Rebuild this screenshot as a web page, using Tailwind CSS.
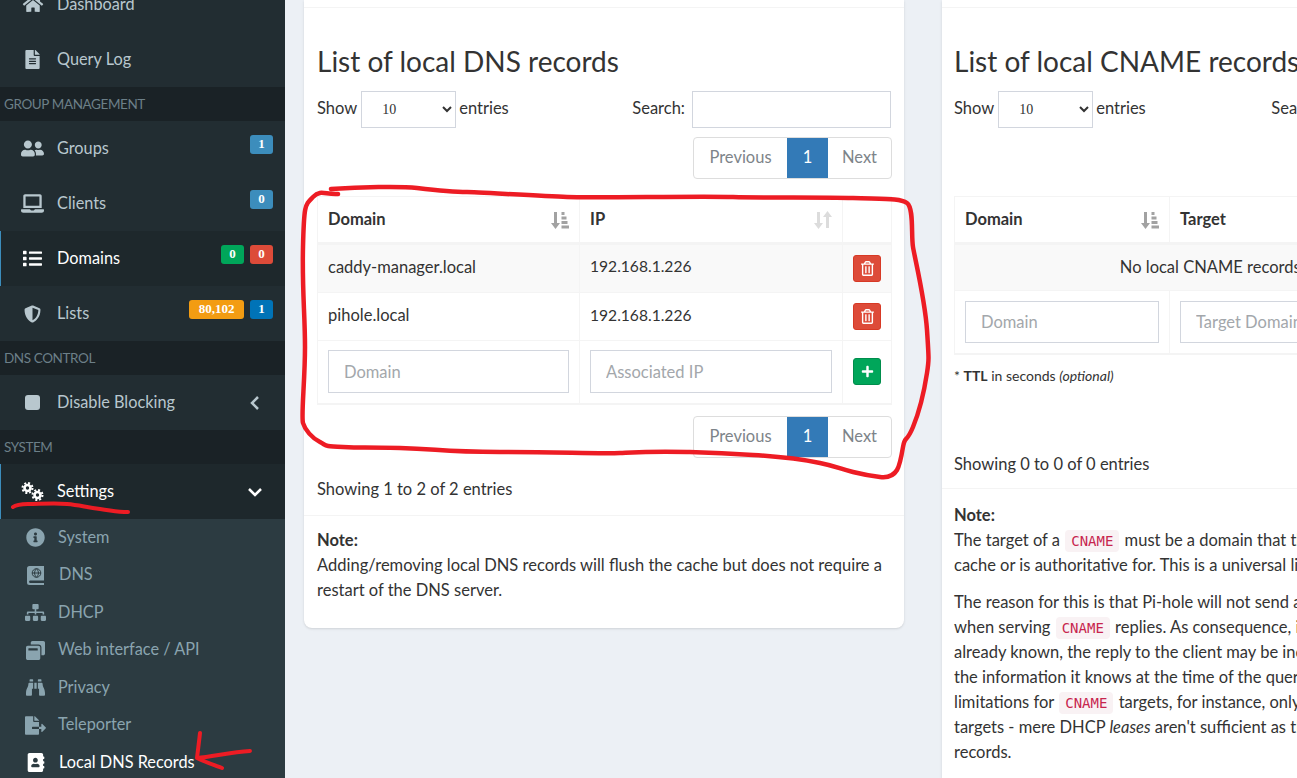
<!doctype html>
<html>

<head>
    <meta charset="UTF-8" />
    <title>Local DNS Records</title>
    <script src="https://cdn.jsdelivr.net/npm/@tailwindcss/browser@4"></script>
</head>

<body class="bg-[#ecf0f5] font-['Lato',sans-serif] text-[16.5px] text-[#333]">
    <div class="relative flex h-[778px] w-[1297px] overflow-hidden">

        <!-- sidebar -->
        <aside class="w-[285px] shrink-0 bg-[#222d32] text-[16.3px] text-[#b8c7ce]">
            <div class="-mt-[24px]">
                <div class="flex h-[56px] items-center pl-[22px]">
                    <svg class="w-[22px] h-[18px] fill-[#b8c7ce]" viewBox="0 0 576 512"><path d="M280.37 148.26L96 300.11V464a16 16 0 0 0 16 16l112.06-.29a16 16 0 0 0 15.92-16V368a16 16 0 0 1 16-16h64a16 16 0 0 1 16 16v95.64a16 16 0 0 0 16 16.05L464 480a16 16 0 0 0 16-16V300L295.67 148.26a12.19 12.19 0 0 0-15.3 0zM571.6 251.47L488 182.56V44.05a12 12 0 0 0-12-12h-56a12 12 0 0 0-12 12v72.61L318.47 43a48 48 0 0 0-61 0L4.34 251.47a12 12 0 0 0-1.6 16.9l25.5 31A12 12 0 0 0 45.15 301l235.22-193.74a12.19 12.19 0 0 1 15.3 0L530.9 301a12 12 0 0 0 16.9-1.6l25.5-31a12 12 0 0 0-1.7-16.93z"/></svg>
                    <span class="ml-[13px]">Dashboard</span>
                </div>
                <div class="flex h-[55px] items-center pb-[1px] pl-[25px]">
                    <svg class="w-[15px] h-[19px] fill-[#b8c7ce]" viewBox="0 0 384 512"><path d="M224 136V0H24C10.7 0 0 10.7 0 24v464c0 13.3 10.7 24 24 24h336c13.3 0 24-10.7 24-24V160H248c-13.2 0-24-10.8-24-24zm64 236c0 6.6-5.4 12-12 12H108c-6.6 0-12-5.4-12-12v-8c0-6.6 5.4-12 12-12h168c6.6 0 12 5.4 12 12v8zm0-64c0 6.6-5.4 12-12 12H108c-6.6 0-12-5.4-12-12v-8c0-6.6 5.4-12 12-12h168c6.6 0 12 5.4 12 12v8zm0-72v8c0 6.6-5.4 12-12 12H108c-6.6 0-12-5.4-12-12v-8c0-6.6 5.4-12 12-12h168c6.6 0 12 5.4 12 12zm96-114.1v6.1H256V0h6.1c6.4 0 12.5 2.5 17 7l97.9 98c4.5 4.5 7 10.6 7 16.9z"/></svg>
                    <span class="ml-[17px]">Query Log</span>
                </div>
            </div>

            <div class="flex h-[34px] items-center bg-[#1a2226] pl-[4px] text-[13.5px] tracking-[-0.4px] text-[#6c7f88]">GROUP MANAGEMENT</div>
            <div class="flex h-[55px] items-center pl-[21px] pr-[12px]">
                <svg class="w-[23px] h-[19px] fill-[#b8c7ce]" viewBox="0 0 640 512"><path d="M192 256c61.9 0 112-50.1 112-112S253.9 32 192 32 80 82.1 80 144s50.1 112 112 112zm76.8 32h-8.3c-20.8 10-43.9 16-68.5 16s-47.6-6-68.5-16h-8.3C51.6 288 0 339.6 0 403.2V432c0 26.5 21.5 48 48 48h288c26.5 0 48-21.5 48-48v-28.8c0-63.6-51.6-115.2-115.2-115.2zM480 256c53 0 96-43 96-96s-43-96-96-96-96 43-96 96 43 96 96 96zm48 32h-3.8c-13.9 4.8-28.6 8-44.2 8s-30.3-3.2-44.2-8H432c-20.4 0-39.2 5.9-55.7 15.4 24.4 26.3 39.7 61.2 39.7 99.8v38.4c0 2.2-.5 4.3-.6 6.4H592c26.5 0 48-21.5 48-48 0-61.9-50.1-112-112-112z"/></svg>
                <span class="ml-[13px] pb-[1px]">Groups</span>
                <span class="ml-auto mb-[9px] flex h-[19px] w-[23px] items-center justify-center rounded-[3px] bg-[#3c8dbc] font-['Liberation_Serif',serif] text-[13px] font-bold text-white">1</span>
            </div>
            <div class="flex h-[55px] items-center pl-[21px] pr-[12px]">
                <svg class="w-[23px] h-[19px] fill-[#b8c7ce]" viewBox="0 0 640 512"><path d="M624 416H381.54c-.74 19.81-14.71 32-32.74 32H288c-18.69 0-33.02-17.47-32.77-32H16c-8.8 0-16 7.2-16 16v16c0 35.2 28.8 64 64 64h512c35.2 0 64-28.8 64-64v-16c0-8.8-7.2-16-16-16zM576 48c0-26.4-21.6-48-48-48H112C85.6 0 64 21.6 64 48v336h512V48zm-64 272H128V64h384v256z"/></svg>
                <span class="ml-[13px] pb-[1px]">Clients</span>
                <span class="ml-auto mb-[9px] flex h-[19px] w-[23px] items-center justify-center rounded-[3px] bg-[#3c8dbc] font-['Liberation_Serif',serif] text-[13px] font-bold text-white">0</span>
            </div>
            <div class="flex h-[55px] items-center border-l border-[#3c8dbc] bg-[#1e282c] pl-[22px] pr-[12px] text-white">
                <svg class="w-[19px] h-[19px] fill-white" viewBox="0 0 512 512"><path d="M80 368H16a16 16 0 0 0-16 16v64a16 16 0 0 0 16 16h64a16 16 0 0 0 16-16v-64a16 16 0 0 0-16-16zm0-320H16A16 16 0 0 0 0 64v64a16 16 0 0 0 16 16h64a16 16 0 0 0 16-16V64a16 16 0 0 0-16-16zm0 160H16a16 16 0 0 0-16 16v64a16 16 0 0 0 16 16h64a16 16 0 0 0 16-16v-64a16 16 0 0 0-16-16zm416 176H176a16 16 0 0 0-16 16v32a16 16 0 0 0 16 16h320a16 16 0 0 0 16-16v-32a16 16 0 0 0-16-16zm0-320H176a16 16 0 0 0-16 16v32a16 16 0 0 0 16 16h320a16 16 0 0 0 16-16V80a16 16 0 0 0-16-16zm0 160H176a16 16 0 0 0-16 16v32a16 16 0 0 0 16 16h320a16 16 0 0 0 16-16v-32a16 16 0 0 0-16-16z"/></svg>
                <span class="ml-[15px] pb-[1px]">Domains</span>
                <span class="ml-auto mb-[9px] flex h-[19px] w-[23px] items-center justify-center rounded-[3px] bg-[#00a65a] font-['Liberation_Serif',serif] text-[13px] font-bold text-white">0</span>
                <span class="ml-[6px] mb-[9px] flex h-[19px] w-[23px] items-center justify-center rounded-[3px] bg-[#dd4b39] font-['Liberation_Serif',serif] text-[13px] font-bold text-white">0</span>
            </div>
            <div class="flex h-[55px] items-center pl-[24px] pr-[12px]">
                <svg class="w-[17px] h-[18px] fill-[#b8c7ce]" viewBox="0 0 512 512"><path d="M466.5 83.7l-192-80a48.15 48.15 0 0 0-36.9 0l-192 80C27.7 91.1 16 108.6 16 128c0 198.5 114.5 335.7 221.5 380.3 11.8 4.9 25.1 4.9 36.9 0C360.1 472.6 496 349.3 496 128c0-19.4-11.7-36.9-29.5-44.3zM256.1 446.3l-.1-381 175.9 73.3c-3.3 151.4-82.1 261.1-175.8 307.7z"/></svg>
                <span class="ml-[16px] pb-[1px]">Lists</span>
                <span class="ml-auto mb-[9px] flex h-[19px] w-[55px] items-center justify-center rounded-[3px] bg-[#f39c12] font-['Liberation_Serif',serif] text-[13px] font-bold text-white">80,102</span>
                <span class="ml-[6px] mb-[9px] flex h-[19px] w-[23px] items-center justify-center rounded-[3px] bg-[#0073b7] font-['Liberation_Serif',serif] text-[13px] font-bold text-white">1</span>
            </div>

            <div class="flex h-[34px] items-center bg-[#1a2226] pl-[4px] text-[13.5px] tracking-[-0.4px] text-[#6c7f88]">DNS CONTROL</div>
            <div class="flex h-[55px] items-center pl-[25px] pr-[25px]">
                <span class="h-[15px] w-[15px] rounded-[3px] bg-[#b8c7ce]"></span>
                <span class="ml-[17px] pb-[1px]">Disable Blocking</span>
                <svg class="ml-auto w-[10px] h-[16px] fill-none stroke-[#b8c7ce] stroke-[2.5]" viewBox="0 0 10 16"><path d="M8 2L2 8l6 6"/></svg>
            </div>

            <div class="flex h-[34px] items-center bg-[#1a2226] pl-[4px] text-[13.5px] tracking-[-0.4px] text-[#6c7f88]">SYSTEM</div>
            <div class="flex h-[55px] items-center border-l border-[#3c8dbc] bg-[#1e282c] pl-[20px] pr-[22px] text-white">
                <svg class="w-[23px] h-[19px] fill-none stroke-white" viewBox="0 0 23 19">
                    <circle cx="6.5" cy="6" r="3" stroke-width="2.6"/><circle cx="6.5" cy="6" r="5" stroke-width="2" stroke-dasharray="2 1.93"/>
                    <circle cx="16.5" cy="13" r="3" stroke-width="2.6"/><circle cx="16.5" cy="13" r="5" stroke-width="2" stroke-dasharray="2 1.93"/>
                </svg>
                <span class="ml-[13px] pb-[1px]">Settings</span>
                <svg class="ml-auto w-[16px] h-[10px] fill-none stroke-white stroke-[2.5]" viewBox="0 0 16 10"><path d="M2 2l6 6 6-6"/></svg>
            </div>

            <!-- settings submenu -->
            <div class="h-[300px] bg-[#2c3b41] text-[#8aa4af]">
                <div class="flex h-[37.5px] items-center pl-[26px]">
                    <svg class="w-[19px] h-[19px] fill-[#8aa4af]" viewBox="0 0 512 512"><path d="M256 8C119.043 8 8 119.083 8 256c0 136.997 111.043 248 248 248s248-111.003 248-248C504 119.083 392.957 8 256 8zm0 110c23.196 0 42 18.804 42 42s-18.804 42-42 42-42-18.804-42-42 18.804-42 42-42zm56 254c0 6.627-5.373 12-12 12h-88c-6.627 0-12-5.373-12-12v-24c0-6.627 5.373-12 12-12h12v-64h-12c-6.627 0-12-5.373-12-12v-24c0-6.627 5.373-12 12-12h64c6.627 0 12 5.373 12 12v100h12c6.627 0 12 5.373 12 12v24z"/></svg>
                    <span class="ml-[13px] pb-[1px]">System</span>
                </div>
                <div class="flex h-[37.5px] items-center pl-[27px]">
                    <svg class="w-[17px] h-[19px]" viewBox="0 0 17 19">
                        <path class="fill-[#8aa4af]" d="M2.5 0H17v14.5H3a1.3 1.3 0 0 0 0 2.5h14v2H2.5A2.5 2.5 0 0 1 0 16.5v-14A2.5 2.5 0 0 1 2.5 0z"/>
                        <g class="fill-none stroke-[#2c3b41]" stroke-width="1"><circle cx="9.5" cy="7" r="4.3"/><path d="M5.2 7h8.6M9.5 2.7c-2.6 2.6-2.6 6 0 8.6M9.5 2.7c2.6 2.6 2.6 6 0 8.6"/></g>
                    </svg>
                    <span class="ml-[15px] pb-[2px]">DNS</span>
                </div>
                <div class="flex h-[37.5px] items-center pl-[25px]">
                    <svg class="w-[21px] h-[17px] fill-[#8aa4af]" viewBox="0 0 640 512"><path d="M128 352H32c-17.67 0-32 14.33-32 32v96c0 17.67 14.33 32 32 32h96c17.67 0 32-14.33 32-32v-96c0-17.67-14.33-32-32-32zm-24-80h192v48h48v-48h192v48h48v-57.59c0-21.17-17.23-38.41-38.41-38.41H344v-64h40c17.67 0 32-14.33 32-32V32c0-17.67-14.33-32-32-32H256c-17.67 0-32 14.33-32 32v96c0 17.67 14.33 32 32 32h40v64H94.41C73.23 224 56 241.23 56 262.41V320h48v-48zm264 80h-96c-17.67 0-32 14.33-32 32v96c0 17.67 14.33 32 32 32h96c17.67 0 32-14.33 32-32v-96c0-17.67-14.33-32-32-32zm240 0h-96c-17.67 0-32 14.33-32 32v96c0 17.67 14.33 32 32 32h96c17.67 0 32-14.33 32-32v-96c0-17.67-14.33-32-32-32z"/></svg>
                    <span class="ml-[12px] pb-[1px]">DHCP</span>
                </div>
                <div class="flex h-[37.5px] items-center pl-[26px]">
                    <svg class="w-[19px] h-[19px] fill-[#8aa4af]" viewBox="0 0 512 512"><path d="M512 48v288c0 26.5-21.5 48-48 48h-48V176c0-44.1-35.9-80-80-80H128V48c0-26.5 21.5-48 48-48h288c26.5 0 48 21.5 48 48zM384 176v288c0 26.5-21.5 48-48 48H48c-26.5 0-48-21.5-48-48V176c0-26.5 21.5-48 48-48h288c26.5 0 48 21.5 48 48zm-68 28c0-6.6-5.4-12-12-12H76c-6.6 0-12 5.4-12 12v52h252v-52z"/></svg>
                    <span class="ml-[13px] pb-[2px]">Web interface / API</span>
                </div>
                <div class="flex h-[37.5px] items-center pl-[26px]">
                    <svg class="w-[19px] h-[19px] fill-[#8aa4af]" viewBox="0 0 512 512"><path d="M416 48c0-8.84-7.16-16-16-16h-64c-8.84 0-16 7.16-16 16v48h96V48zM63.91 159.99C61.4 253.84 3.46 274.22 0 404v44c0 17.67 14.33 32 32 32h96c17.67 0 32-14.33 32-32V288h32V128H95.84c-17.63 0-31.45 14.37-31.93 31.99zm384.18 0c-.48-17.62-14.3-31.99-31.93-31.99H320v160h32v160c0 17.67 14.33 32 32 32h96c17.67 0 32-14.33 32-32v-44c-3.46-129.78-61.4-150.16-63.91-244.01zM176 32h-64c-8.84 0-16 7.16-16 16v48h96V48c0-8.84-7.16-16-16-16zm48 256h64V128h-64v160z"/></svg>
                    <span class="ml-[13px] pb-[1px]">Privacy</span>
                </div>
                <div class="flex h-[37.5px] items-center pl-[25px]">
                    <svg class="w-[21px] h-[19px] fill-[#8aa4af]" viewBox="0 0 576 512"><path d="M384 121.9c0-6.3-2.5-12.4-7-16.9L279.1 7c-4.5-4.5-10.6-7-17-7H256v128h128zM571 308l-95.7-96.4c-10.1-10.1-27.4-3-27.4 11.3V288h-64v64h64v65.2c0 14.3 17.3 21.4 27.4 11.3L571 332c6.6-6.6 6.6-17.4 0-24zm-379 28v-32c0-8.8 7.2-16 16-16h176V160H248c-13.2 0-24-10.8-24-24V0H24C10.7 0 0 10.7 0 24v464c0 13.3 10.7 24 24 24h336c13.3 0 24-10.7 24-24V352H208c-8.8 0-16-7.2-16-16z"/></svg>
                    <span class="ml-[12px] pb-[2px]">Teleporter</span>
                </div>
                <div class="flex h-[37.5px] items-center pl-[27px] text-white">
                    <svg class="w-[18px] h-[19px] fill-white" viewBox="0 0 448 512"><path d="M436 160c6.6 0 12-5.4 12-12v-40c0-6.6-5.4-12-12-12h-20V48c0-26.5-21.5-48-48-48H48C21.5 0 0 21.5 0 48v416c0 26.5 21.5 48 48 48h320c26.5 0 48-21.5 48-48v-48h20c6.6 0 12-5.4 12-12v-40c0-6.6-5.4-12-12-12h-20v-64h20c6.6 0 12-5.4 12-12v-40c0-6.6-5.4-12-12-12h-20v-64h20zm-228-32c35.3 0 64 28.7 64 64s-28.7 64-64 64-64-28.7-64-64 28.7-64 64-64zm112 236.8c0 10.6-10 19.2-22.4 19.2H118.4C106 384 96 375.4 96 364.8v-19.2c0-31.8 30.1-57.6 67.2-57.6h5c12.3 5.1 25.7 8 39.8 8s27.6-2.9 39.8-8h5c37.1 0 67.2 25.8 67.2 57.6v19.2z"/></svg>
                    <span class="ml-[14px] pb-[1px]">Local DNS Records</span>
                </div>
            </div>
        </aside>

        <!-- content -->
        <main class="flex items-start gap-[38px] pl-[19px]">

            <!-- dns records card -->
            <section class="w-[600px] shrink-0 rounded-b-lg bg-white shadow-sm">
                <div class="h-[8px] border-b border-[#f4f4f4]"></div>
                <div class="px-[13px]">
                    <h3 class="mt-[33px] h-[41px] text-[28px] leading-[40px]">List of local DNS records</h3>
                    <div class="mt-[9px] flex h-[37px] items-center">
                        <span class="pb-[3px]">Show</span>
                        <select class="ml-[4px] mr-[3px] h-[37px] w-[95px] border border-[#d2d6de] bg-white px-[16px] font-['Liberation_Serif',serif] text-[14px]"><option>10</option></select>
                        <span class="pb-[3px]">entries</span>
                        <span class="ml-auto mr-[7px] pb-[3px]">Search:</span>
                        <input class="h-[37px] w-[199px] border border-[#d2d6de]" type="search" aria-label="Search">
                    </div>
                    <div class="mt-[9px] -mr-[1px] flex justify-end">
                        <div class="flex h-[42px] overflow-hidden rounded-[4px] border border-[#ddd] text-[#7d8489]">
                            <span class="flex w-[93px] items-center justify-center pb-[1px]">Previous</span>
                            <span class="flex w-[41px] items-center justify-center bg-[#337ab7] pb-[1px] text-white">1</span>
                            <span class="flex w-[63px] items-center justify-center pb-[1px]">Next</span>
                        </div>
                    </div>

                    <table class="mt-[17px] w-[575px] table-fixed border-collapse border border-[#f4f4f4]">
                        <thead>
                            <tr class="h-[47px] border-b-[3px] border-[#f4f4f4]">
                                <th class="w-[262px] border-r border-[#f4f4f4] px-[10px] text-left font-bold">
                                    <div class="flex items-center justify-between"><span class="pb-[1px]">Domain</span>
                                        <svg class="w-[18px] h-[18px] fill-[#a2a2a2]" viewBox="0 0 18 18"><path d="M3 1h3v11h3l-4.5 6L0 12h3zM10.5 1h3v3h-3zM10.5 5.500h5v3h-5zM10.500 10h6v3h-6zM10.500 14.500h7.500v3h-7.500z"/></svg>
                                    </div>
                                </th>
                                <th class="w-[263px] border-r border-[#f4f4f4] px-[10px] text-left font-bold">
                                    <div class="flex items-center justify-between"><span class="pb-[1px]">IP</span>
                                        <svg class="w-[18px] h-[18px] fill-[#dcdcdc]" viewBox="0 0 18 18"><path d="M3 1h3v11h3l-4.500 6L0 12h3zM12 17h3V6h3L13.500 0 9 6h3z"/></svg>
                                    </div>
                                </th>
                                <th></th>
                            </tr>
                        </thead>
                        <tbody>
                            <tr class="h-[49px] border-b border-[#f4f4f4] bg-[#f9f9f9]">
                                <td class="border-r border-[#f4f4f4] px-[10px] pb-[3px]">caddy-manager.local</td>
                                <td class="border-r border-[#f4f4f4] px-[10px] pb-[3px] text-[15.6px]">192.168.1.226</td>
                                <td class="pb-[1px] text-center">
                                    <span class="mx-auto flex h-[27px] w-[28px] items-center justify-center rounded-[3px] border border-[#d73925] bg-[#dd4b39]">
                                        <svg class="w-[13px] h-[15px] fill-white" viewBox="0 0 448 512"><path d="M268 416h24a12 12 0 0 0 12-12V188a12 12 0 0 0-12-12h-24a12 12 0 0 0-12 12v216a12 12 0 0 0 12 12zM432 80h-82.410l-34-56.700A48 48 0 0 0 274.410 0H173.590a48 48 0 0 0-41.160 23.300L98.410 80H16A16 16 0 0 0 0 96v16a16 16 0 0 0 16 16h16v336a48 48 0 0 0 48 48h288a48 48 0 0 0 48-48V128h16a16 16 0 0 0 16-16V96a16 16 0 0 0-16-16zM171.840 50.910A6 6 0 0 1 177 48h94a6 6 0 0 1 5.150 2.910L293.610 80H154.390zM368 464H80V128h288zm-212-48h24a12 12 0 0 0 12-12V188a12 12 0 0 0-12-12h-24a12 12 0 0 0-12 12v216a12 12 0 0 0 12 12z"/></svg>
                                    </span>
                                </td>
                            </tr>
                            <tr class="h-[48px] border-b border-[#f4f4f4]">
                                <td class="border-r border-[#f4f4f4] px-[10px] pb-[2px]">pihole.local</td>
                                <td class="border-r border-[#f4f4f4] px-[10px] pb-[2px] text-[15.6px]">192.168.1.226</td>
                                <td class="text-center">
                                    <span class="mx-auto flex h-[27px] w-[28px] items-center justify-center rounded-[3px] border border-[#d73925] bg-[#dd4b39]">
                                        <svg class="w-[13px] h-[15px] fill-white" viewBox="0 0 448 512"><path d="M268 416h24a12 12 0 0 0 12-12V188a12 12 0 0 0-12-12h-24a12 12 0 0 0-12 12v216a12 12 0 0 0 12 12zM432 80h-82.410l-34-56.700A48 48 0 0 0 274.410 0H173.590a48 48 0 0 0-41.160 23.300L98.410 80H16A16 16 0 0 0 0 96v16a16 16 0 0 0 16 16h16v336a48 48 0 0 0 48 48h288a48 48 0 0 0 48-48V128h16a16 16 0 0 0 16-16V96a16 16 0 0 0-16-16zM171.840 50.910A6 6 0 0 1 177 48h94a6 6 0 0 1 5.150 2.910L293.610 80H154.390zM368 464H80V128h288zm-212-48h24a12 12 0 0 0 12-12V188a12 12 0 0 0-12-12h-24a12 12 0 0 0-12 12v216a12 12 0 0 0 12 12z"/></svg>
                                    </span>
                                </td>
                            </tr>
                            <tr class="h-[63px] border-b-[2px] border-[#f4f4f4]">
                                <td class="border-r border-[#f4f4f4] px-[10px]"><input class="h-[43px] w-full border border-[#d2d6de] px-[15px] placeholder:text-[#a3a7ab]" placeholder="Domain"></td>
                                <td class="border-r border-[#f4f4f4] px-[10px]"><input class="h-[43px] w-full border border-[#d2d6de] px-[15px] placeholder:text-[#a3a7ab]" placeholder="Associated IP"></td>
                                <td class="text-center">
                                    <span class="mx-auto flex h-[27px] w-[28px] items-center justify-center rounded-[3px] border border-[#008d4c] bg-[#00a65a]">
                                        <svg class="w-[13px] h-[13px] fill-white" viewBox="0 0 448 512"><path d="M416 208H272V64c0-17.670-14.330-32-32-32h-32c-17.670 0-32 14.330-32 32v144H32c-17.670 0-32 14.330-32 32v32c0 17.670 14.330 32 32 32h144v144c0 17.670 14.330 32 32 32h32c17.670 0 32-14.330 32-32V304h144c17.670 0 32-14.330 32-32v-32c0-17.670-14.330-32-32-32z"/></svg>
                                    </span>
                                </td>
                            </tr>
                        </tbody>
                    </table>

                    <div class="mt-[11px] -mr-[1px] flex justify-end">
                        <div class="flex h-[42px] overflow-hidden rounded-[4px] border border-[#ddd] text-[#7d8489]">
                            <span class="flex w-[93px] items-center justify-center pb-[1px]">Previous</span>
                            <span class="flex w-[41px] items-center justify-center bg-[#337ab7] pb-[1px] text-white">1</span>
                            <span class="flex w-[63px] items-center justify-center pb-[1px]">Next</span>
                        </div>
                    </div>
                    <p class="mt-[19px] leading-[25px]">Showing 1 to 2 of 2 entries</p>
                </div>
                <div class="mt-[13px] border-t border-[#f4f4f4] px-[13px] pb-[25px] pt-[12px] leading-[25px]">
                    <p class="font-bold">Note:</p>
                    <p>Adding/removing local DNS records will flush the cache but does not require a<br>restart of the DNS server.</p>
                </div>
            </section>

            <!-- cname records card, runs off the right edge -->
            <section class="h-[778px] w-[600px] shrink-0 bg-white shadow-sm">
                <div class="h-[8px] border-b border-[#f4f4f4]"></div>
                <div class="px-[12px]">
                    <h3 class="mt-[33px] h-[41px] text-[28px] leading-[40px]">List of local CNAME records</h3>
                    <div class="mt-[9px] flex h-[37px] items-center">
                        <span class="pb-[3px]">Show</span>
                        <select class="ml-[4px] mr-[3px] h-[37px] w-[95px] border border-[#d2d6de] bg-white px-[16px] font-['Liberation_Serif',serif] text-[14px]"><option>10</option></select>
                        <span class="pb-[3px]">entries</span>
                        <span class="ml-auto mr-[7px] pb-[3px]">Search:</span>
                        <input class="h-[37px] w-[199px] border border-[#d2d6de]" type="search" aria-label="Search">
                    </div>

                    <table class="mt-[68px] w-[575px] table-fixed border-collapse border border-[#f4f4f4]">
                        <thead>
                            <tr class="h-[47px] border-b-[3px] border-[#f4f4f4]">
                                <th class="w-[215px] border-r border-[#f4f4f4] px-[10px] text-left font-bold">
                                    <div class="flex items-center justify-between"><span class="pb-[1px]">Domain</span>
                                        <svg class="w-[18px] h-[18px] fill-[#a2a2a2]" viewBox="0 0 18 18"><path d="M3 1h3v11h3l-4.500 6L0 12h3zM10.500 1h3v3h-3zM10.500 5.500h5v3h-5zM10.500 10h6v3h-6zM10.500 14.500h7.500v3h-7.500z"/></svg>
                                    </div>
                                </th>
                                <th class="w-[215px] border-r border-[#f4f4f4] px-[10px] pb-[1px] text-left font-bold">Target</th>
                                <th class="border-r border-[#f4f4f4] px-[10px] pb-[1px] text-left font-bold">TTL *</th>
                                <th class="w-[48px]"></th>
                            </tr>
                        </thead>
                        <tbody>
                            <tr class="h-[47px] border-b border-[#f4f4f4] bg-[#f9f9f9]">
                                <td class="px-[10px] text-center" colspan="4">No local CNAME records defined.</td>
                            </tr>
                            <tr class="h-[63px] border-b-[2px] border-[#f4f4f4]">
                                <td class="border-r border-[#f4f4f4] px-[10px] pt-[1px]"><input class="h-[42px] w-full border border-[#d2d6de] px-[15px] placeholder:text-[#a3a7ab]" placeholder="Domain"></td>
                                <td class="border-r border-[#f4f4f4] px-[10px] pt-[1px]"><input class="h-[42px] w-full border border-[#d2d6de] px-[15px] placeholder:text-[#a3a7ab]" placeholder="Target Domain"></td>
                                <td class="border-r border-[#f4f4f4] px-[10px]"></td>
                                <td></td>
                            </tr>
                        </tbody>
                    </table>

                    <p class="mt-[11px] text-[14px] leading-[20px]">* <b>TTL</b> in seconds <i>(optional)</i></p>
                    <p class="mt-[66px] leading-[25px]">Showing 0 to 0 of 0 entries</p>
                </div>
                <div class="mt-[11px] border-t border-[#f4f4f4] px-[12px] pt-[14px] leading-[25px] whitespace-nowrap">
                    <p class="font-bold">Note:</p>
                    <p>The target of a <code class="mx-[1px] rounded-[4px] bg-[#f9f2f4] px-[6px] py-[3px] font-['DejaVu_Sans_Mono',monospace] text-[14px] leading-none text-[#c7254e]">CNAME</code> must be a domain that the Pi-hole already has in its<br>cache or is authoritative for. This is a universal limitation of CNAME records.</p>
                    <p class="mt-[12px]">The reason for this is that Pi-hole will not send additional queries upstream<br>when serving <code class="mx-[1px] rounded-[4px] bg-[#f9f2f4] px-[6px] py-[3px] font-['DejaVu_Sans_Mono',monospace] text-[14px] leading-none text-[#c7254e]">CNAME</code> replies. As consequence, if you set a target that isn't<br>already known, the reply to the client may be incomplete. Pi-hole just returns<br>the information it knows at the time of the query. This results in certain<br>limitations for <code class="mx-[1px] rounded-[4px] bg-[#f9f2f4] px-[6px] py-[3px] font-['DejaVu_Sans_Mono',monospace] text-[14px] leading-none text-[#c7254e]">CNAME</code> targets, for instance, only active DHCP leases work as<br>targets - mere DHCP <i>leases</i> aren't sufficient as they aren't (yet) valid DNS<br>records.</p>
                </div>
            </section>
        </main>

        <!-- red marker annotations drawn over the screenshot -->
        <svg class="pointer-events-none absolute inset-0 h-[778px] w-[1297px] fill-none stroke-[#ed1c24]" viewBox="0 0 1297 778" stroke-linecap="round" stroke-linejoin="round">
            <path stroke-width="4.500" d="M331 189C360 187 400 186 417 188S460 192 467 192 540 196 567 197 700 196 733 197 820 197 853 198 900 198 907 203 911 235 913 247 925 300 927 330 929 360 927 373 920 410 913 427 905 435 903 447 900 465 897 470 888 478 880 477 865 475 853 472 835 466 820 463 785 457 753 455 720 453 687 452 640 452 620 453 560 452 500 452 440 449 400 448 365 448 343 447 328 446 320 442 305 430 303 423 305 380 305 347 302 290 303 247 305 205 313 197 325 195 338 194"/>
            <path stroke-width="4" d="M13 507C18 503 28 504 33 504S55 503 67 504 85 507 100 509 118 512 128 512"/>
            <path stroke-width="4" d="M200 733C199 742 198 750 197 758 205 762 214 765 222 768M197 758C215 756 232 752 250 751"/>
        </svg>
    </div>
</body>

</html>
